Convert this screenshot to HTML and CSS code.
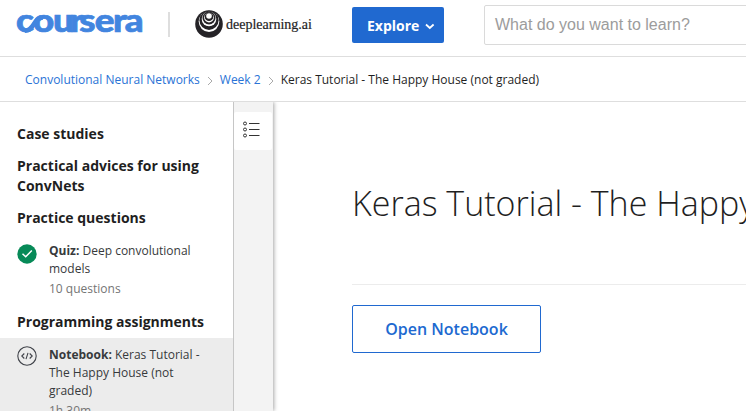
FILE: index.html
```html
<!DOCTYPE html>
<html lang="en">
<head>
<meta charset="utf-8">
<title>Keras Tutorial - The Happy House | Coursera</title>
<link rel="stylesheet" href="styles.css">
</head>
<body>
<header class="topbar">
  <svg class="brand" width="130" height="24" viewBox="0 0 130 24">
    <text class="brand-text" y="20.300" x="0 14.800 32.200 46.700 55 68.500 84.300 94.500" transform="scale(1.150 1)">coursera</text>
    <path class="brand-loop" d="M9 18.600C18 19.300 17 5.700 27 5.500"/>
  </svg>
  <span class="divider"></span>
  <div class="partner">
    <svg width="28" height="28" viewBox="0 0 28 28">
      <circle cx="14" cy="14" r="13.800" fill="#252327"/>
      <circle cx="14" cy="11.600" r="10.300" fill="#fff"/>
      <circle cx="14" cy="10.300" r="9.600" fill="#252327"/>
      <circle cx="14" cy="9" r="7.300" fill="#fff"/>
      <circle cx="14" cy="8" r="6.500" fill="#252327"/>
      <circle cx="14" cy="7.600" r="4.900" fill="#fff"/>
      <circle cx="14" cy="6.800" r="4.300" fill="#252327"/>
      <circle cx="14" cy="6" r="2.800" fill="#fff"/>
    </svg>
    <span class="partner-name">deeplearning.ai</span>
  </div>
  <button class="explore">Explore
    <svg width="10" height="7" viewBox="0 0 10 7"><path d="M1 1.500l3.800 3.500 3.800-3.500"/></svg>
  </button>
  <div class="search">What do you want to learn?</div>
</header>
<nav class="crumbs">
  <a class="crumb-course">Convolutional Neural Networks</a>
  <svg class="sep" width="6" height="10" viewBox="0 0 6 10"><path d="M1 1L5 5 1 9"/></svg>
  <a class="crumb-week">Week 2</a>
  <svg class="sep" width="6" height="10" viewBox="0 0 6 10"><path d="M1 1L5 5 1 9"/></svg>
  <span class="crumb-page">Keras Tutorial - The Happy House (not graded)</span>
</nav>
<div class="body">
  <aside class="sidebar">
    <h2>Case studies</h2>
    <h2>Practical advices for using ConvNets</h2>
    <h2>Practice questions</h2>
    <div class="item">
      <svg width="20" height="20" viewBox="0 0 20 20"><circle cx="10" cy="10" r="9.700" fill="#078a58"/><path d="M5.500 9.800l3.200 3L14.800 6.500" fill="none" stroke="#fff" stroke-width="1.500"/></svg>
      <div class="item-text"><p><b>Quiz:</b> Deep convolutional models</p><p class="meta">10 questions</p></div>
    </div>
    <h2>Programming assignments</h2>
    <div class="item current">
      <svg width="20" height="20" viewBox="0 0 20 20" fill="none" stroke="#40434a" stroke-width="1.100"><circle cx="10" cy="10" r="9.200"/><path d="M7.300 7.500L4.800 10l2.500 2.500M12.700 7.500l2.500 2.500-2.500 2.500M11 6.800L9 13.200"/></svg>
      <div class="item-text"><p><b>Notebook:</b> Keras Tutorial - The Happy House (not graded)</p><p class="meta">1h 30m</p></div>
    </div>
  </aside>
  <div class="rail">
    <div class="rail-tab">
      <svg width="18" height="18" viewBox="0 0 18 18" fill="none" stroke="#333"><circle cx="3" cy="2.500" r="1.500"/><circle cx="3" cy="8.500" r="1.500"/><circle cx="3" cy="14.500" r="1.500"/><path d="M7 2.500H17.500M7 8.500H17.500M7 14.500H17.500"/></svg>
    </div>
  </div>
  <main class="content">
    <h1>Keras Tutorial - The Happy House</h1>
    <button class="open">Open Notebook</button>
  </main>
</div>
</body>
</html>
```
FILE: styles.css
```css
* { box-sizing: border-box; }
body { margin: 0; height: 411px; overflow: hidden; background: #fff; color: #1f1f1f; font-family: "Open Sans", sans-serif; }
h1, h2, p { margin: 0; }
button { font-family: inherit; padding: 0; }
.topbar { display: flex; height: 57px; border-bottom: 1px solid #dedede; padding-left: 16px; overflow: hidden; }
.brand { flex: none; margin-top: 12px; overflow: visible; }
.brand-text { font-family: Lato, sans-serif; font-weight: 900; font-size: 32px; fill: #4285df; stroke: #4285df; stroke-width: .7; }
.brand-loop { fill: none; stroke: #4285df; stroke-width: 4.500; }
.divider { flex: none; width: 2px; height: 25px; margin: 12px 0 0 22px; background: #dedede; }
.partner { display: flex; flex: none; width: 182px; padding: 10px 0 0 25px; }
.partner svg { flex: none; }
.partner-name { margin-left: 3px; font: 14px/29px "Liberation Serif", serif; color: #242424; -webkit-text-stroke: .2px #242424; }
.explore { flex: none; display: flex; align-items: center; width: 92px; height: 36px; margin-top: 7px; padding-left: 15px; border: 0; border-radius: 2px; background: #2069d0; color: #fff; font-weight: 700; font-size: 14px; }
.explore svg { margin: 2px 0 0 6px; fill: none; stroke: #fff; stroke-width: 1.800; }
.search { flex: none; width: 300px; height: 40px; margin: 5px 0 0 40px; padding-left: 10px; border: 1px solid #dadada; border-radius: 2px; color: #9c9c9c; font: 300 16px/38px "Liberation Sans", sans-serif; white-space: nowrap; }
.crumbs { display: flex; align-items: center; height: 45px; padding: 2px 0 0 25px; border-bottom: 1px solid #dedede; font-size: 12px; line-height: 18px; white-space: nowrap; }
.crumbs a { color: #2a73d6; }
.sep { margin: 1px 7px 0; fill: none; stroke: #aaa; }
.body { display: flex; height: 309px; }
.sidebar { flex: none; width: 233px; padding-top: 22px; }
h2 { margin: 0 17px 12px; font-size: 14px; line-height: 20px; font-weight: 700; }
.item { display: flex; padding: 2px 25px 14px 17px; font-size: 12px; line-height: 18px; color: #373a3c; }
.item svg { flex: none; margin-top: 2px; }
.item.current svg { margin-top: 0; }
.item-text { margin-left: 12px; }
.meta { margin-top: 2px; color: #757575; }
.current { margin-top: -6px; padding-top: 8px; background: #ececec; }
.rail { flex: none; width: 40px; padding-top: 10px; border-left: 1px solid #c6c6c6; background: #f3f3f3; box-shadow: 1px 0 4px rgba(0,0,0,.35); clip-path: inset(0 -6px 0 0); }
.rail-tab { display: flex; width: 38px; height: 38px; padding: 9px 0 0 8px; border-radius: 2px; background: #fff; }
.content { flex: 1; min-width: 0; padding-left: 79px; }
h1 { height: 183px; padding-top: 77px; border-bottom: 1px solid #ececec; font-size: 34px; line-height: 48px; font-weight: 300; white-space: nowrap; }
.open { display: block; width: 189px; height: 48px; margin-top: 20px; border: 1px solid #2069d0; border-radius: 2px; background: #fff; color: #2069d0; font-size: 16px; font-weight: 600; }
```
